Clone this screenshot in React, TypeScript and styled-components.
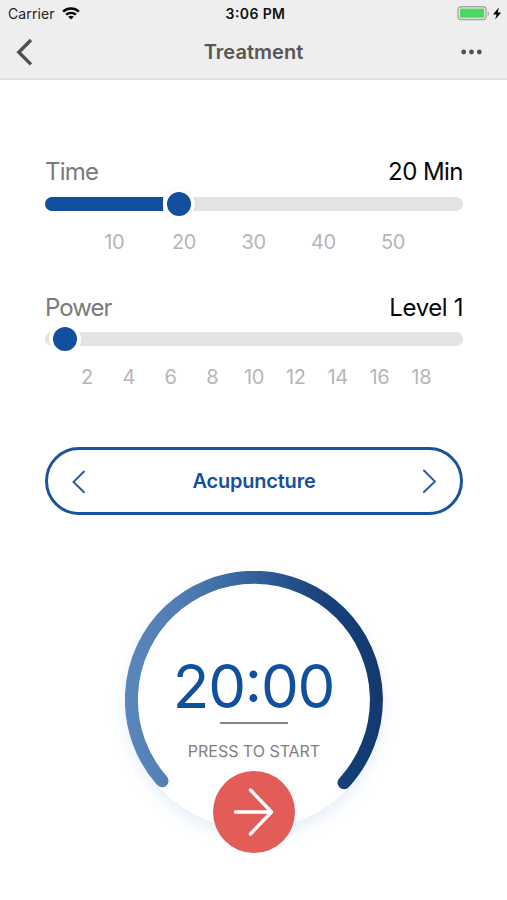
import React from "react";
import styled, { createGlobalStyle } from "styled-components";

const GlobalStyle = createGlobalStyle`
  * { box-sizing: border-box; }
  body { margin: 0; background: #fff; font-family: Inter, "Liberation Sans", sans-serif; }
  button { font: inherit; border: 0; padding: 0; background: none; cursor: pointer; }
  svg { display: block; flex: none; }
`;

const Screen = styled.main`
  width: 507px;
  height: 900px;
  overflow: hidden;
  background: #fff;
`;

const Header = styled.header`
  height: 80px;
  background: #eeeeee;
  border-bottom: 2px solid #e2e2e2;
`;

const StatusBar = styled.div`
  height: 28px;
  display: grid;
  grid-template-columns: 1fr auto 1fr;
  align-items: center;
  padding: 0 5px 0 8px;
  color: #111;
`;

const Carrier = styled.div`
  display: flex;
  align-items: center;
  gap: 7px;
  font-size: 14px;
  line-height: 28px;
  letter-spacing: 0.1px;
  color: #222;
`;

const Clock = styled.div`
  font-size: 14px;
  line-height: 28px;
  font-weight: 600;
  font-feature-settings: "case";
  letter-spacing: 0.4px;
  padding-left: 1px;
`;

const Power = styled.div`
  display: flex;
  justify-content: flex-end;
`;

const NavBar = styled.div`
  height: 48px;
  display: grid;
  grid-template-columns: 1fr auto 1fr;
  align-items: center;
  padding: 0 25px 0 16px;
`;

const Title = styled.h1`
  margin: 0;
  padding-left: 9px;
  font-size: 20px;
  line-height: 48px;
  font-weight: 600;
  letter-spacing: 0.05px;
  color: #575757;
`;

const IconButton = styled.button<{ $end?: boolean }>`
  justify-self: ${(p) => (p.$end ? "end" : "start")};
`;

const Controls = styled.div`
  padding: 75px 44px 0 45px;
`;

const Setting = styled.section`
  height: 135px;
`;

const SettingHead = styled.div<{ $drop?: number }>`
  display: flex;
  justify-content: space-between;
  height: 34px;
  padding-top: ${(p) => p.$drop ?? 0}px;
  font-size: 24px;
  line-height: 34px;
`;

const Label = styled.span<{ $spacing: number }>`
  color: #7a7a7a;
  letter-spacing: ${(p) => p.$spacing}px;
`;

const Value = styled.span<{ $spacing: number }>`
  color: #080808;
  letter-spacing: ${(p) => p.$spacing}px;
`;

const Track = styled.div`
  display: flex;
  align-items: center;
  height: 14px;
  margin-top: 8px;
  border-radius: 7px;
  background: #e3e3e3;
`;

const Fill = styled.div<{ $width: number }>`
  width: ${(p) => p.$width}px;
  height: 14px;
  border-radius: 7px 0 0 7px;
  background: #124f9e;
`;

const Thumb = styled.div<{ $halo: boolean }>`
  width: 32px;
  height: 32px;
  flex: none;
  margin-left: ${(p) => (p.$halo ? 0 : 4)}px;
  border: 4px solid #fff;
  border-radius: 50%;
  background: #124f9e;
  box-shadow: ${(p) => (p.$halo ? "0 0 1px rgba(0, 0, 0, 0.18)" : "none")};
`;

const Scale = styled.div<{ $step: number; $pad: number }>`
  display: grid;
  grid-auto-flow: column;
  grid-auto-columns: ${(p) => p.$step}px;
  padding-left: ${(p) => p.$pad}px;
  margin-top: 17px;
  font-size: 20px;
  line-height: 28px;
  letter-spacing: -0.3px;
  text-align: center;
  color: #b6b6b6;
`;

const ModePicker = styled.div`
  display: flex;
  align-items: center;
  justify-content: space-between;
  height: 68px;
  margin-top: 22px;
  padding: 0 24px;
  border: 3px solid #1c539f;
  border-radius: 34px;
`;

const ModeName = styled.span`
  font-size: 20px;
  line-height: 28px;
  font-weight: 600;
  letter-spacing: -0.2px;
  color: #184f9b;
`;

const Dial = styled.section`
  display: grid;
  justify-items: center;
  width: 258px;
  height: 282px;
  margin: 56px auto 0 125px;
`;

const Ring = styled.div`
  grid-area: 1 / 1;
  align-self: start;
  width: 258px;
  height: 258px;
  border-radius: 50%;
  background: #fff;
  box-shadow: 0 7px 16px rgba(60, 125, 220, 0.13);
`;

const Readout = styled.div`
  grid-area: 1 / 1;
  display: flex;
  flex-direction: column;
  align-items: center;
  padding-top: 80px;
`;

const Remaining = styled.div`
  padding-right: 1px;
  font-size: 60px;
  line-height: 70px;
  font-feature-settings: "case";
  letter-spacing: -1.2px;
  color: #124f9e;
`;

const Rule = styled.div`
  width: 68px;
  height: 2px;
  margin-top: 1px;
  background: #868686;
`;

const Hint = styled.div`
  margin-top: 16px;
  font-size: 16px;
  line-height: 22px;
  letter-spacing: -0.02px;
  color: #808080;
`;

const StartButton = styled.button`
  grid-area: 1 / 1;
  align-self: end;
  display: grid;
  place-items: center;
  width: 82px;
  height: 82px;
  border-radius: 50%;
  background: #e25d58;
`;

function WifiIcon() {
  return (
    <svg width="18" height="14" viewBox="0 0 18 14" fill="none" stroke="#050505" strokeWidth="2.4">
      <path d="M1.1 4.6C5.4.5 12.6.5 16.9 4.6" />
      <path d="M4.1 7.7c2.7-2.5 7.1-2.5 9.8 0" />
      <path d="M9 12.6 6.2 9.8c1.6-1.4 4-1.4 5.6 0z" fill="#050505" stroke="none" />
    </svg>
  );
}

function BatteryIcon() {
  return (
    <svg width="45" height="16" viewBox="0 0 45 16">
      <rect x="1.1" y="0.7" width="28" height="12.8" rx="3" fill="#f4f4f4" stroke="#a5a5a5" strokeWidth="1.4" />
      <rect x="2.9" y="2.5" width="24.4" height="9.2" rx="1" fill="#4cd763" />
      <path d="M30.7 5.2c1.7.5 1.7 4.3 0 4.8z" fill="#a5a5a5" />
      <path d="M41.8 1.6 36 8.4h3.5l-1.3 5.2L44.2 6.6h-3.4z" fill="#080808" />
    </svg>
  );
}

function Chevron({ right = false }: { right?: boolean }) {
  return (
    <svg width="15" height="25" viewBox="0 0 15 25" fill="none" stroke="#2458a0" strokeWidth="1.9" strokeLinecap="round">
      <path d={right ? "M3 1.5 14 12.5 3 23" : "M12 2.5 1.5 13 12 23.2"} />
    </svg>
  );
}

const timeMarks = [10, 20, 30, 40, 50];
const powerMarks = [2, 4, 6, 8, 10, 12, 14, 16, 18];

export default function App() {
  return (
    <Screen>
      <GlobalStyle />
      <Header>
        <StatusBar>
          <Carrier>
            Carrier <WifiIcon />
          </Carrier>
          <Clock>3:06 PM</Clock>
          <Power>
            <BatteryIcon />
          </Power>
        </StatusBar>
        <NavBar>
          <IconButton aria-label="Back">
            <svg width="18" height="28" viewBox="0 0 18 28" fill="none" stroke="#505050" strokeWidth="3.4">
              <path d="M15 2 2.8 14.2 15 26.4" />
            </svg>
          </IconButton>
          <Title>Treatment</Title>
          <IconButton $end aria-label="More">
            <svg width="21" height="6" viewBox="0 0 21 6" fill="#505050">
              <circle cx="2.7" cy="3" r="2.4" />
              <circle cx="10.5" cy="3" r="2.4" />
              <circle cx="18.3" cy="3" r="2.4" />
            </svg>
          </IconButton>
        </NavBar>
      </Header>

      <Controls>
        <Setting>
          <SettingHead>
            <Label $spacing={-0.75}>Time</Label>
            <Value $spacing={-0.55}>20 Min</Value>
          </SettingHead>
          <Track>
            <Fill $width={118} />
            <Thumb $halo />
          </Track>
          <Scale $step={69.7} $pad={34.5}>
            {timeMarks.map((m) => (
              <span key={m}>{m}</span>
            ))}
          </Scale>
        </Setting>
        <Setting>
          <SettingHead $drop={1}>
            <Label $spacing={-0.95}>Power</Label>
            <Value $spacing={-0.4}>Level 1</Value>
          </SettingHead>
          <Track>
            <Fill $width={0} />
            <Thumb $halo={false} />
          </Track>
          <Scale $step={41.8} $pad={21}>
            {powerMarks.map((m) => (
              <span key={m}>{m}</span>
            ))}
          </Scale>
        </Setting>
        <ModePicker>
          <IconButton aria-label="Previous mode">
            <Chevron />
          </IconButton>
          <ModeName>Acupuncture</ModeName>
          <IconButton aria-label="Next mode">
            <Chevron right />
          </IconButton>
        </ModePicker>
      </Controls>

      <Dial>
        <Ring>
          <svg width="258" height="258" viewBox="0 0 258 258" fill="none">
            <defs>
              <linearGradient id="arc" gradientUnits="userSpaceOnUse" x1="0" y1="0" x2="258" y2="0">
                <stop offset="0" stopColor="#5b86bb" />
                <stop offset="0.2" stopColor="#527eb5" />
                <stop offset="0.5" stopColor="#34609c" />
                <stop offset="0.8" stopColor="#173f79" />
                <stop offset="1" stopColor="#123a70" />
              </linearGradient>
            </defs>
            <path
              d="M37 209.8A122.5 122.5 0 1 1 219 211.8"
              stroke="url(#arc)"
              strokeWidth="13"
              strokeLinecap="round"
            />
          </svg>
        </Ring>
        <Readout>
          <Remaining>20:00</Remaining>
          <Rule />
          <Hint>PRESS TO START</Hint>
        </Readout>
        <StartButton aria-label="Start">
          <svg width="42" height="50" viewBox="0 0 42 50" fill="none" stroke="#fff" strokeWidth="3.4" strokeLinecap="round" strokeLinejoin="round">
            <path d="M2.5 25h35M17.5 3 38.5 25l-21 22" />
          </svg>
        </StartButton>
      </Dial>
    </Screen>
  );
}
